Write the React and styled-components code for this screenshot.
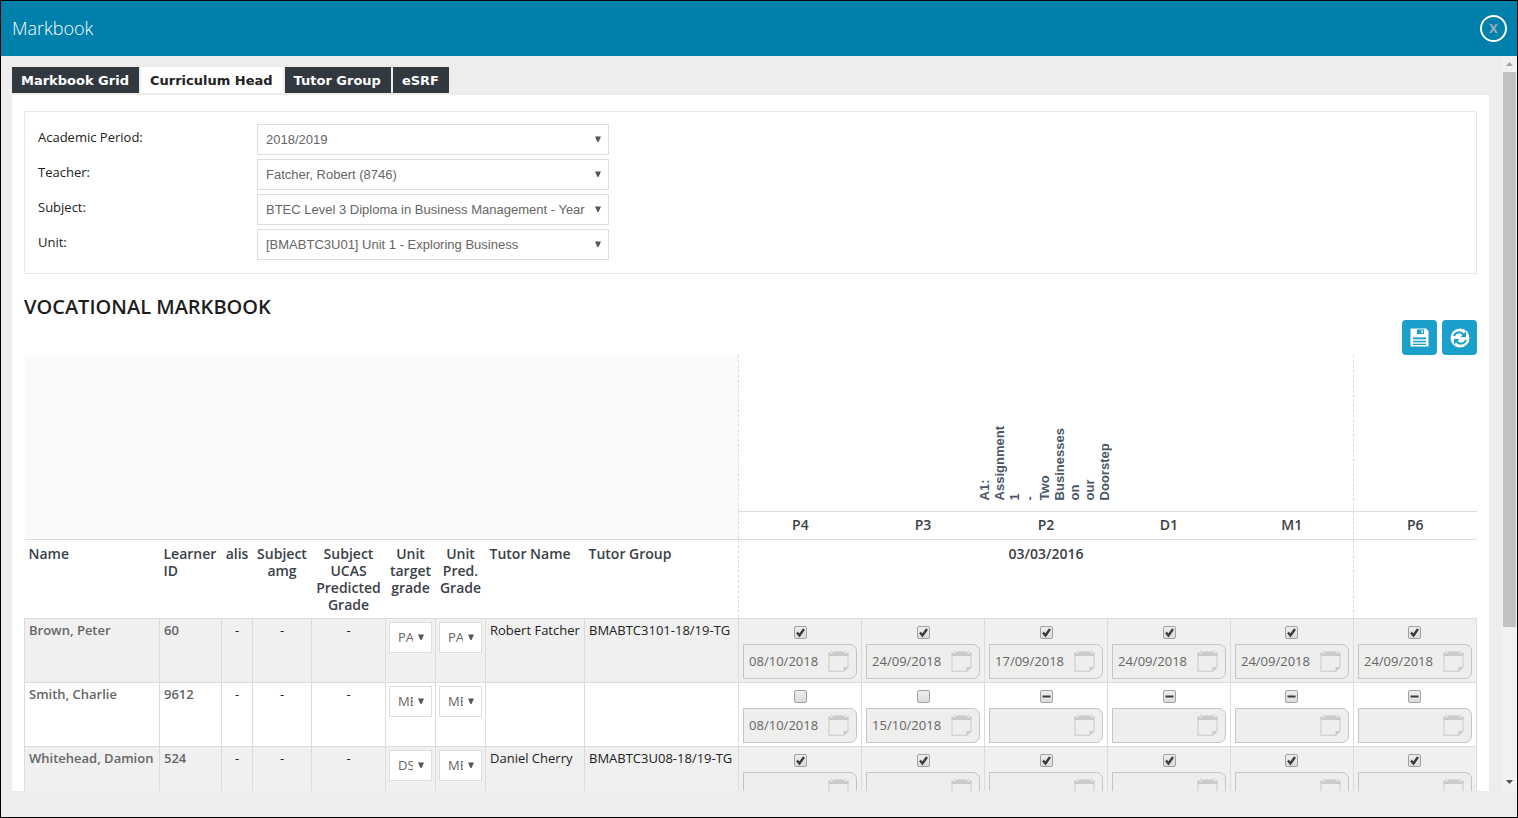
import React, { useEffect, useRef } from "react";
import styled, { createGlobalStyle, css } from "styled-components";

const GlobalStyle = createGlobalStyle`
  *, *::before, *::after { box-sizing: border-box; }
  html, body { margin: 0; background: #ededed; }
  body { font-family: "Open Sans", "Noto Sans", sans-serif; font-size: 13px; line-height: 17px; color: #222; }
`;

const Dialog = styled.main`
  display: flex;
  flex-direction: column;
  height: 100vh;
  padding-bottom: 26px;
  border: 1px solid #000;
  background: #ededed;
`;

const TitleBar = styled.header`
  display: flex;
  flex: none;
  align-items: center;
  justify-content: space-between;
  height: 55px;
  padding: 0 10px 0 11px;
  background: #0080ab;
`;

const DialogTitle = styled.h1`
  margin: 0;
  padding-bottom: 2px;
  color: #fff;
  font-size: 18px;
  font-weight: 300;
  line-height: 24px;
`;

const CloseButton = styled.button`
  width: 27px;
  height: 27px;
  padding: 2px 0 0;
  border: 2px solid #fff;
  border-radius: 50%;
  background: transparent;
  color: #93a9bc;
  font: bold 12px/21px "DejaVu Sans", sans-serif;
  cursor: pointer;
`;

const Viewport = styled.div`
  display: flex;
  flex: 1;
  min-height: 0;
`;

const Content = styled.div`
  flex: 1;
  min-width: 0;
  padding: 11px 13px 0 11px;
  overflow-y: auto;
  scrollbar-width: none;
`;

const ScrollTrack = styled.div`
  display: flex;
  flex: none;
  flex-direction: column;
  width: 15px;
  background: #f1f1f1;
`;

const ScrollArrow = styled.svg`
  flex: none;
  width: 15px;
  height: 16px;
  fill: ${(p) => p.$color};
`;

const ScrollRail = styled.div`
  flex: 1;
  padding: 0 1px;
`;

const ScrollThumb = styled.div`
  height: 79%;
  background: #c1c1c1;
`;

const Tabs = styled.nav`
  display: flex;
  gap: 2px;
  padding-bottom: 2px;
`;

const Tab = styled.a`
  padding: 1px 10px 0 9px;
  background: ${(p) => (p.$active ? "#fff" : "#323840")};
  color: ${(p) => (p.$active ? "#222" : "#fff")};
  font: bold 13px/25px "DejaVu Sans", sans-serif;
  text-decoration: none;
`;

const Panel = styled.section`
  padding: 16px 12px;
  background: #fff;
`;

const Filters = styled.form`
  display: grid;
  grid-template-columns: 219px 352px;
  row-gap: 4px;
  padding: 12px 12px 13px 13px;
  border: 1px solid #e6e7e8;
`;

const FilterLabel = styled.label`
  padding-top: 5px;
`;

const SelectShell = styled.div`
  display: grid;
  align-items: center;
  width: 100%;

  > * { grid-area: 1 / 1; }
`;

const SelectBox = styled.select`
  appearance: none;
  width: 100%;
  height: 31px;
  padding: 0 18px 0 8px;
  border: 1px solid #dcdee0;
  border-radius: 0;
  background: #fff;
  color: #666;
  font: 13px "${(p) => (p.$compact ? "Open Sans" : "Liberation Sans")}", sans-serif;
`;

const SelectArrow = styled.svg`
  justify-self: end;
  width: 6px;
  height: 7px;
  margin-right: 8px;
  fill: #555;
  pointer-events: none;
`;

const Heading = styled.h2`
  margin: 20px 0 0;
  color: #1d1d1d;
  font-size: 20px;
  font-weight: 600;
  line-height: 26px;
`;

const Toolbar = styled.div`
  display: flex;
  justify-content: flex-end;
  gap: 5px;
`;

const ToolButton = styled.button`
  display: grid;
  place-items: center;
  width: 35px;
  height: 35px;
  padding: 0;
  border: 0;
  border-radius: 4px;
  background: #1b9fcb;
  cursor: pointer;
`;

const Grid = styled.table`
  width: 100%;
  min-width: 1300px;
  border-collapse: collapse;
  table-layout: fixed;
`;

const dashedLeft = css`
  border-left: 1px dashed #dcdcdc;
`;

const Spacer = styled.td`
  background: #fafafa;
  border-bottom: 1px solid #dcdcdc;
`;

const AssignmentCell = styled.th`
  height: 156px;
  padding: 0 4px 10px 0;
  border-bottom: 1px solid #dcdcdc;
  vertical-align: bottom;
  ${dashedLeft}
`;

const VerticalTitle = styled.div`
  display: inline-block;
  color: #4b5666;
  font: bold 13px/15px "Liberation Sans", sans-serif;
  text-align: left;
  vertical-align: bottom;
  writing-mode: vertical-rl;
  transform: rotate(180deg);
`;

const Word = styled.span`
  display: block;
`;

const CriterionCell = styled.th`
  height: 28px;
  padding: 0 0 2px;
  border-bottom: 1px solid #dcdcdc;
  color: #3a4147;
  font-size: 14px;
  font-weight: 600;
  ${(p) => p.$dashed && dashedLeft}
`;

const HeadCell = styled.th`
  height: 79px;
  padding: 5px 4px;
  color: #3a4147;
  font-size: 14px;
  font-weight: 600;
  line-height: 17px;
  text-align: ${(p) => p.$align || "center"};
  vertical-align: top;
  ${(p) => p.$dashed && dashedLeft}
`;

const LearnerRow = styled.tr`
  background: #fff;

  &:nth-child(odd) { background: #f0f0f0; }
`;

const Cell = styled.td`
  height: 64px;
  padding: 3px 4px;
  border: 1px solid #dcdcdc;
  text-align: ${(p) => p.$align || "left"};
  vertical-align: top;
  white-space: nowrap;
`;

const KeyCell = styled(Cell)`
  color: #666;
  font-weight: 600;
`;

const GradeCell = styled(Cell)`
  padding: 3px;
`;

const MarkCell = styled(Cell)`
  padding: 7px 4px 3px;
`;

const Mark = styled.div`
  display: flex;
  flex-direction: column;
  align-items: center;
  gap: 5px;
`;

const TickShell = styled.span`
  display: grid;
  width: 13px;
  height: 13px;

  > * { grid-area: 1 / 1; }
  svg { pointer-events: none; }
`;

const Tick = styled.input`
  appearance: none;
  width: 13px;
  height: 13px;
  margin: 0;
  border: 1px solid #a2a2a2;
  border-radius: 2px;
  background: linear-gradient(#eee, #dcdcdc);
`;

const DateShell = styled.div`
  display: grid;
  align-items: center;
  width: 100%;

  > * { grid-area: 1 / 1; }
`;

const DateInput = styled.input`
  width: 100%;
  height: 35px;
  padding: 0 30px 0 5px;
  border: 1px solid #c5c5c5;
  border-radius: 0 7px 7px 0;
  background: #eeeeec;
  color: #666;
  font: 13px "Open Sans", sans-serif;
`;

const Calendar = styled.svg`
  justify-self: end;
  width: 21px;
  height: 23px;
  margin-right: 8px;
  pointer-events: none;
`;

function CalendarIcon() {
  return (
    <Calendar viewBox="0 0 21 23" aria-hidden="true">
      <path d="M1 6V21.300H15.500L20 17V6" fill="none" stroke="#d4d4d4" strokeWidth="1.400" />
      <path d="M0.300 2.500H2.500V3.500H4.500V1.500H16.500V3.500H18.500V2.500H20.700V6H0.300Z" fill="#cacaca" />
      <path d="M3.500 0V2.500M17.500 0V2.500" stroke="#d6d6d6" strokeWidth="1" />
      <path d="M15.500 17H20.500L15.500 22Z" fill="#cacaca" />
    </Calendar>
  );
}

function SaveIcon() {
  return (
    <svg width="19" height="19" viewBox="0 0 19 19" aria-hidden="true">
      <path d="M1 0.500H16L18.500 3V18.500H0.500V1Z" fill="#fff" />
      <path d="M7 1.500H14V6H7Z" fill="#1b9fcb" />
      <path d="M11.500 2.500H13V5H11.500Z" fill="#fff" />
      <path d="M3 9H16V17H3Z" fill="#7cc5df" />
      <path d="M3 10.500H16M3 13.500H16M3 16.500H16" stroke="#1b9fcb" strokeWidth="1" />
      <path d="M3 12H16M3 15H16" stroke="#fff" strokeWidth="1" />
    </svg>
  );
}

function RefreshIcon() {
  return (
    <svg width="20" height="20" viewBox="0 0 20 20" aria-hidden="true">
      <circle cx="10" cy="10" r="9.500" fill="#fff" />
      <path d="M4 8C5.500 4 10.500 3 13.500 6.500" fill="none" stroke="#1b9fcb" strokeWidth="2" />
      <path d="M16 3.500V9H10.500Z" fill="#1b9fcb" />
      <path d="M16 12C14.500 16 9.500 17 6.500 13.500" fill="none" stroke="#1b9fcb" strokeWidth="2" />
      <path d="M4 16.500V11H9.500Z" fill="#1b9fcb" />
    </svg>
  );
}

function Select({ id, label, value, compact }) {
  return (
    <SelectShell>
      <SelectBox id={id} aria-label={label} $compact={compact} defaultValue={value}>
        <option>{value}</option>
      </SelectBox>
      <SelectArrow viewBox="0 0 6 7" aria-hidden="true">
        <path d="M0 0.500H6L3.500 6H2.500Z" />
      </SelectArrow>
    </SelectShell>
  );
}

function CheckMark({ state, label }) {
  const ref = useRef(null);
  useEffect(() => {
    ref.current.indeterminate = state === "mixed";
  }, [state]);
  return (
    <TickShell>
      <Tick ref={ref} type="checkbox" aria-label={label} defaultChecked={state === "on"} />
      {state === "on" && (
        <svg viewBox="0 0 13 13" aria-hidden="true">
          <path d="M3 6.500L5.500 9.500L10 3" fill="none" stroke="#3c3c3c" strokeWidth="2.400" />
        </svg>
      )}
      {state === "mixed" && (
        <svg viewBox="0 0 13 13" aria-hidden="true">
          <path d="M2.500 6.500H10.500" stroke="#3c3c3c" strokeWidth="2" />
        </svg>
      )}
    </TickShell>
  );
}

const filters = [
  { id: "period", label: "Academic Period:", value: "2018/2019" },
  { id: "teacher", label: "Teacher:", value: "Fatcher, Robert (8746)" },
  { id: "subject", label: "Subject:", value: "BTEC Level 3 Diploma in Business Management - Year" },
  { id: "unit", label: "Unit:", value: "[BMABTC3U01] Unit 1 - Exploring Business" },
];

const tabs = ["Markbook Grid", "Curriculum Head", "Tutor Group", "eSRF"];
const assignmentWords = ["A1:", "Assignment", "1", "-", "Two", "Businesses", "on", "our", "Doorstep"];
const criteria = ["P4", "P3", "P2", "D1", "M1", "P6"];
const columnWidths = [135, 62, 31, 59, 74, 50, 50, 99, 154];

const headings = [
  { text: "Name", align: "left" },
  { text: "Learner ID", align: "left" },
  { text: "alis" },
  { text: "Subject amg" },
  { text: "Subject UCAS Predicted Grade" },
  { text: "Unit target grade" },
  { text: "Unit Pred. Grade" },
  { text: "Tutor Name", align: "left" },
  { text: "Tutor Group", align: "left" },
];

const learners = [
  {
    name: "Brown, Peter", id: "60", target: "PA", predicted: "PA",
    tutor: "Robert Fatcher", group: "BMABTC3101-18/19-TG",
    marks: [
      ["on", "08/10/2018"], ["on", "24/09/2018"], ["on", "17/09/2018"],
      ["on", "24/09/2018"], ["on", "24/09/2018"], ["on", "24/09/2018"],
    ],
  },
  {
    name: "Smith, Charlie", id: "9612", target: "ME", predicted: "ME",
    tutor: "", group: "",
    marks: [
      ["off", "08/10/2018"], ["off", "15/10/2018"], ["mixed", ""],
      ["mixed", ""], ["mixed", ""], ["mixed", ""],
    ],
  },
  {
    name: "Whitehead, Damion", id: "524", target: "DS", predicted: "ME",
    tutor: "Daniel Cherry", group: "BMABTC3U08-18/19-TG",
    marks: [["on", ""], ["on", ""], ["on", ""], ["on", ""], ["on", ""], ["on", ""]],
  },
];

function Markbook() {
  return (
    <Grid>
      <colgroup>
        {columnWidths.map((width, i) => <col key={i} width={width} />)}
        {criteria.map((c) => <col key={c} />)}
      </colgroup>
      <thead>
        <tr>
          <Spacer colSpan={9} rowSpan={2} />
          <AssignmentCell colSpan={5}>
            <VerticalTitle>
              {assignmentWords.map((word) => <Word key={word}>{word}</Word>)}
            </VerticalTitle>
          </AssignmentCell>
          <AssignmentCell />
        </tr>
        <tr>
          {criteria.map((c, i) => (
            <CriterionCell key={c} $dashed={i === 0 || i === 5}>{c}</CriterionCell>
          ))}
        </tr>
        <tr>
          {headings.map((h) => (
            <HeadCell key={h.text} $align={h.align}>{h.text}</HeadCell>
          ))}
          <HeadCell colSpan={5} $dashed>03/03/2016</HeadCell>
          <HeadCell $dashed />
        </tr>
      </thead>
      <tbody>
        {learners.map((l) => (
          <LearnerRow key={l.id}>
            <KeyCell>{l.name}</KeyCell>
            <KeyCell>{l.id}</KeyCell>
            <Cell $align="center">-</Cell>
            <Cell $align="center">-</Cell>
            <Cell $align="center">-</Cell>
            <GradeCell><Select compact label="Unit target grade" value={l.target} /></GradeCell>
            <GradeCell><Select compact label="Unit predicted grade" value={l.predicted} /></GradeCell>
            <Cell>{l.tutor}</Cell>
            <Cell>{l.group}</Cell>
            {l.marks.map(([state, date], i) => (
              <MarkCell key={criteria[i]}>
                <Mark>
                  <CheckMark state={state} label={`${criteria[i]} achieved`} />
                  <DateShell>
                    <DateInput type="text" aria-label={`${criteria[i]} date`} defaultValue={date} readOnly />
                    <CalendarIcon />
                  </DateShell>
                </Mark>
              </MarkCell>
            ))}
          </LearnerRow>
        ))}
      </tbody>
    </Grid>
  );
}

export default function App() {
  return (
    <>
      <GlobalStyle />
      <Dialog>
        <TitleBar>
          <DialogTitle>Markbook</DialogTitle>
          <CloseButton type="button" aria-label="Close">X</CloseButton>
        </TitleBar>
        <Viewport>
          <Content>
            <Tabs>
              {tabs.map((t) => (
                <Tab key={t} href="#" $active={t === "Curriculum Head"}>{t}</Tab>
              ))}
            </Tabs>
            <Panel>
              <Filters>
                {filters.map((f) => (
                  <React.Fragment key={f.id}>
                    <FilterLabel htmlFor={f.id}>{f.label}</FilterLabel>
                    <Select id={f.id} value={f.value} />
                  </React.Fragment>
                ))}
              </Filters>
              <Heading>VOCATIONAL MARKBOOK</Heading>
              <Toolbar>
                <ToolButton type="button" aria-label="Save"><SaveIcon /></ToolButton>
                <ToolButton type="button" aria-label="Refresh"><RefreshIcon /></ToolButton>
              </Toolbar>
              <Markbook />
            </Panel>
          </Content>
          <ScrollTrack aria-hidden="true">
            <ScrollArrow viewBox="0 0 15 16" $color="#a3a3a3"><path d="M4 10L7.500 6L11 10Z" /></ScrollArrow>
            <ScrollRail><ScrollThumb /></ScrollRail>
            <ScrollArrow viewBox="0 0 15 16" $color="#505050"><path d="M4 5H11L7.500 9Z" /></ScrollArrow>
          </ScrollTrack>
        </Viewport>
      </Dialog>
    </>
  );
}
